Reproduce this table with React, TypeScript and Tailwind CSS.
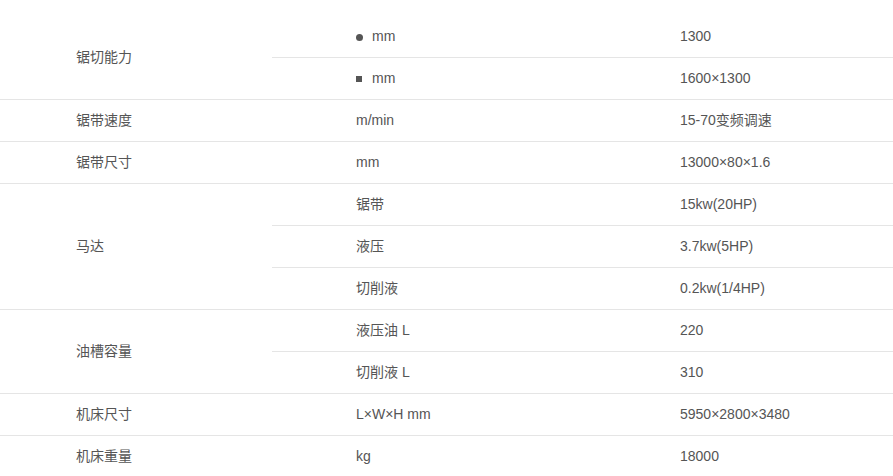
import React from 'react';

type Sub = { label: React.ReactNode; value: string };
type Row = { name: string; subs: Sub[] };

const dot = <span className="mr-[9px] inline-block h-[7px] w-[7px] rounded-full bg-[#555] align-middle" />;
const square = <span className="mr-[10px] inline-block h-[6px] w-[6px] bg-[#555] align-middle" />;

const rows: Row[] = [
  {
    name: '锯切能力',
    subs: [
      { label: <>{dot}mm</>, value: '1300' },
      { label: <>{square}mm</>, value: '1600×1300' },
    ],
  },
  { name: '锯带速度', subs: [{ label: 'm/min', value: '15-70变频调速' }] },
  { name: '锯带尺寸', subs: [{ label: 'mm', value: '13000×80×1.6' }] },
  {
    name: '马达',
    subs: [
      { label: '锯带', value: '15kw(20HP)' },
      { label: '液压', value: '3.7kw(5HP)' },
      { label: '切削液', value: '0.2kw(1/4HP)' },
    ],
  },
  {
    name: '油槽容量',
    subs: [
      { label: '液压油 L', value: '220' },
      { label: '切削液 L', value: '310' },
    ],
  },
  { name: '机床尺寸', subs: [{ label: 'L×W×H mm', value: '5950×2800×3480' }] },
  { name: '机床重量', subs: [{ label: 'kg', value: '18000' }] },
];

const cell = 'h-[42px] border-b border-[#e5e5e5] p-0 pt-[1px] align-middle';

export default function App() {
  return (
    <div className="min-h-[476px] w-[893px] overflow-hidden bg-white pt-[15px] text-[14px] text-[#555] [font-family:'Liberation_Sans','Noto_Sans_CJK_SC',sans-serif]">
      <table className="w-full border-collapse">
        <tbody>
          {rows.flatMap((row) =>
            row.subs.map((sub, i) => (
              <tr key={row.name + i}>
                {i === 0 && (
                  <td rowSpan={row.subs.length} className={`${cell} w-[272px] pl-[76px]`}>
                    {row.name}
                  </td>
                )}
                <td className={`${cell} w-[324px] pl-[84px]`}>{sub.label}</td>
                <td className={`${cell} pl-[84px]`}>{sub.value}</td>
              </tr>
            ))
          )}
        </tbody>
      </table>
    </div>
  );
}
